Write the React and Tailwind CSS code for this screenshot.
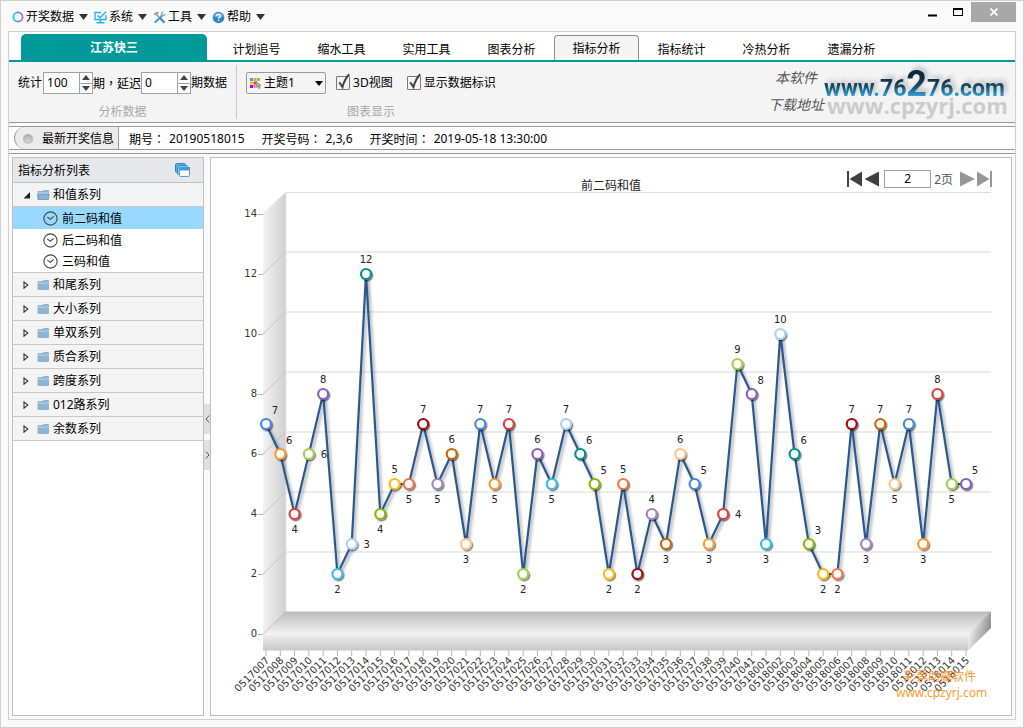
import React, { useState } from "react";

const COLORS = [
  "#4587dc", "#ff9830", "#d9403e", "#a3cf4b", "#8560b8", "#37bce3", "#a8d3f6", "#00918f",
  "#8ab700", "#ffba0e", "#fa7048", "#a30810", "#a184bf", "#cb6606", "#fdc384",
];

// Each entry is [value, label side]: a = above, b = below, r = right, u = upper right.
const SERIES = [
  [7, "u"], [6, "u"], [4, "b"], [6, "r"], [8, "a"], [2, "b"], [3, "r"], [12, "a"], [4, "b"], [5, "a"],
  [5, "b"], [7, "a"], [5, "b"], [6, "a"], [3, "b"], [7, "a"], [5, "b"], [7, "a"], [2, "b"], [6, "a"],
  [5, "b"], [7, "a"], [6, "u"], [5, "u"], [2, "b"], [5, "a"], [2, "b"], [4, "a"], [3, "b"], [6, "a"],
  [5, "u"], [3, "b"], [4, "r"], [9, "a"], [8, "u"], [3, "b"], [10, "a"], [6, "u"], [3, "u"], [2, "b"],
  [2, "b"], [7, "a"], [3, "b"], [7, "a"], [5, "b"], [7, "a"], [3, "b"], [8, "a"], [5, "b"], [5, "u"],
];

const LABEL_SHIFT = { a: [0, -11], b: [0, 19], r: [15, 4], u: [9, -10] };

const POINTS = SERIES.map(([value, side], i) => ({
  value,
  side,
  x: 55 + (i * 100) / 7,
  y: 442 - value * 30,
  color: COLORS[i % COLORS.length],
  issue: i < 35 ? "05170" + String(i + 7).padStart(2, "0") : "05180" + String(i - 34).padStart(2, "0"),
}));

const AXIS = [0, 2, 4, 6, 8, 10, 12, 14];

function Chart() {
  return (
    <svg viewBox="0 0 800 523" className="block w-full" role="img" aria-label="前二码和值">
      <defs>
        <linearGradient id="wall" x1="0" x2="1" y1="0" y2="0">
          <stop offset="0" stopColor="#f3f3f3" />
          <stop offset="1" stopColor="#cfcfcf" />
        </linearGradient>
        <linearGradient id="floor" x1="0" x2="0" y1="0" y2="1">
          <stop offset="0" stopColor="#bababa" />
          <stop offset="1" stopColor="#f2f2f2" />
        </linearGradient>
        <linearGradient id="front" x1="0" x2="0" y1="0" y2="1">
          <stop offset="0" stopColor="#f2f2f2" />
          <stop offset="1" stopColor="#c6c6c6" />
        </linearGradient>
        <linearGradient id="side" x1="0" x2="1" y1="0.3" y2="0.7">
          <stop offset="0.1" stopColor="#f0f0f0" />
          <stop offset="0.9" stopColor="#8c8c8c" />
        </linearGradient>
        <filter id="soft" x="-5%" y="-5%" width="110%" height="115%">
          <feDropShadow dx="2" dy="2" stdDeviation="1.6" floodColor="#000" floodOpacity="0.35" />
        </filter>
        <filter id="dot" x="-40%" y="-40%" width="200%" height="200%">
          <feDropShadow dx="1.2" dy="1.4" stdDeviation="0.5" floodColor="#000" floodOpacity="0.5" />
        </filter>
      </defs>

      <polygon points="52,21 75,0 75,419 52,442" fill="url(#wall)" />
      <path d="M75 0.5H780" stroke="#dcdcdc" />
      <path d="M75 0V419" stroke="#e4e4e4" />
      {AXIS.slice(1, 7).map((v) => (
        <g key={v}>
          <path d={`M52 ${442 - v * 30}L74.5 ${420 - v * 30}`} stroke="#c4c4c4" />
          <path d={`M75 ${420 - v * 30}H780`} stroke="#ececec" strokeWidth="2" />
        </g>
      ))}
      <polygon points="52,442 75,419 780,419 757,442" fill="url(#floor)" />
      <rect x="52" y="441.5" width="705" height="17" fill="url(#front)" />
      <polygon points="757,442 780,419 780,436 757,458.5" fill="url(#side)" />
      <path d="M52 442L75 419" stroke="#c4c4c4" />
      <path d="M75 419.5H780" stroke="#dcdcdc" />

      <g fontFamily="'DejaVu Sans', Verdana, sans-serif" fontSize="10" fill="#333">
        {AXIS.map((v) => (
          <g key={v}>
            <path d={`M47 ${442.5 - v * 30}H52`} stroke="#b4b4b4" />
            <text x="46" y={445 - v * 30} textAnchor="end">{v}</text>
          </g>
        ))}
        {POINTS.map((p, i) => (
          <g key={i}>
            <path d={`M${p.x} 458.5V464`} stroke="#b4b4b4" />
            <text transform={`translate(${p.x + 4} 469) rotate(-45)`} textAnchor="end">{p.issue}</text>
          </g>
        ))}
      </g>

      <polyline
        points={POINTS.map((p) => `${p.x},${p.y}`).join(" ")}
        fill="none" stroke="#2b598f" strokeWidth="2.2" strokeLinejoin="bevel" filter="url(#soft)"
      />
      {POINTS.map((p, i) => (
        <circle key={i} cx={p.x} cy={p.y} r="5" fill="#fff" stroke={p.color} strokeWidth="2.2" filter="url(#dot)" />
      ))}
      <g fontFamily="'DejaVu Sans', Verdana, sans-serif" fontSize="10" fill="#222" textAnchor="middle">
        {POINTS.map((p, i) => (
          <text key={i} x={p.x + LABEL_SHIFT[p.side][0]} y={p.y + LABEL_SHIFT[p.side][1]}>{p.value}</text>
        ))}
      </g>
      <g fontFamily="'Noto Sans', 'Noto Sans CJK SC', sans-serif" fontSize="12" fill="#ff9a33">
        <text x="693" y="489">彩票助赢软件</text>
        <text x="685" y="505">www.cpzyrj.com</text>
      </g>
    </svg>
  );
}

function Caret() {
  return (
    <svg width="9" height="6" viewBox="0 0 9 6" aria-hidden="true">
      <path d="M0 0H9L4.5 6Z" fill="#333" />
    </svg>
  );
}

function RingIcon() {
  return (
    <svg width="12" height="12" viewBox="0 0 12 12" aria-hidden="true">
      <defs>
        <linearGradient id="ring" x1="0" x2="1" y1="0" y2="0">
          <stop offset="0" stopColor="#12c4f5" />
          <stop offset="0.6" stopColor="#5a8cf0" />
          <stop offset="1" stopColor="#b65fdc" />
        </linearGradient>
      </defs>
      <circle cx="6" cy="6" r="4.6" fill="none" stroke="url(#ring)" strokeWidth="1.7" />
    </svg>
  );
}

function MonitorIcon() {
  return (
    <svg width="13" height="13" viewBox="0 0 13 13" fill="none" aria-hidden="true">
      <path d="M7 1.5H1V8.5H12V4" stroke="#2badf0" strokeWidth="1.3" />
      <path d="M3.5 4.5L6 6.8L12.2 0.8" stroke="#2badf0" strokeWidth="1.5" />
      <path d="M6.5 8.5V11.5M2.5 11.8H10.5" stroke="#2badf0" strokeWidth="1.4" />
    </svg>
  );
}

function ToolsIcon() {
  return (
    <svg width="13" height="13" viewBox="0 0 13 13" fill="none" aria-hidden="true">
      <path d="M1.8 11.8L9.3 4.2" stroke="#4c9bd6" strokeWidth="2" />
      <path d="M12.2 2.2L10.3 4L9 2.8L10.8 0.9C8.8 0.3 7.2 2 7.9 4L9 5.2C11.2 5.8 13 4 12.2 2.2Z" fill="#8aa6bd" />
      <path d="M3.5 3.5L7 7" stroke="#8d9aa6" strokeWidth="1.5" />
      <path d="M0.5 3.3L3.2 0.8L6.2 1.3L3.6 4.8L2.4 3.4L1.4 4.4Z" fill="#97a5b1" />
      <path d="M6.8 6.8L11.5 11.8" stroke="#3c8fd0" strokeWidth="2.3" />
    </svg>
  );
}

function HelpIcon() {
  return (
    <svg width="13" height="13" viewBox="0 0 13 13" aria-hidden="true">
      <circle cx="6.5" cy="6.5" r="5.8" fill="#2f86cf" />
      <path d="M1.5 5.5A5.2 5.2 0 0 1 11.5 5.5Q6.5 7.5 1.5 5.5Z" fill="#67acdf" />
      <path d="M4.6 5.1C4.6 2.6 8.5 2.7 8.4 5C8.3 6.3 6.6 6.3 6.5 7.7M6.5 8.8V10.1" fill="none" stroke="#fff" strokeWidth="1.4" />
    </svg>
  );
}

function PaletteIcon() {
  return (
    <svg width="12" height="12" viewBox="0 0 12 12" aria-hidden="true">
      <path d="M0 1H3V4H0Z" fill="#2fa4e7" />
      <path d="M3.5 1H6.5V4H3.5Z" fill="#f6a31c" />
      <path d="M7 1H10V4H7Z" fill="#8cc83c" />
      <path d="M0 4.5H3V7.5H0Z" fill="#f3c21a" />
      <path d="M3.5 4.5H6.5V7.5H3.5Z" fill="#ee3d3d" />
      <path d="M0 8H3V11H0Z" fill="#b200f0" />
      <path d="M3.5 8H5.5V11H3.5Z" fill="#f05ab0" />
      <path d="M6 4.5L11 8.5L9.2 8.8L10.2 11L8.9 11.6L7.9 9.4L6.5 10.5Z" fill="#aaa" stroke="#777" strokeWidth="0.6" />
    </svg>
  );
}

function FolderIcon({ open }) {
  return (
    <svg width="13" height="12" viewBox="0 0 13 12" aria-hidden="true">
      <path d="M0.5 3Q0.5 2 1.5 2H5.5L7 1H11Q12 1 12 2V10Q12 11 11 11H1.5Q0.5 11 0.5 10Z" fill="#8fb3d3" />
      <path d="M1 3.3H12V5H1Z" fill="#a9cbe1" />
      {open && <path d="M0.5 5.5H12.3L11.3 10.5H1.3Z" fill="#8eb0cf" stroke="#7497b8" strokeWidth="0.7" />}
    </svg>
  );
}

function ClockIcon() {
  return (
    <svg width="15" height="15" viewBox="0 0 15 15" fill="none" aria-hidden="true">
      <circle cx="7.5" cy="7.5" r="6.6" stroke="#444" strokeWidth="1.1" />
      <path d="M4.3 5.8L7.2 8.3L10.8 5.4" stroke="#444" strokeWidth="1.1" />
    </svg>
  );
}

function WindowsIcon() {
  return (
    <svg width="15" height="14" viewBox="0 0 15 14" aria-hidden="true">
      <rect x="0.5" y="0.5" width="10" height="9" rx="1" fill="#5fb2dc" stroke="#2789bf" />
      <rect x="2.5" y="2.5" width="10" height="9" rx="1" fill="#8cc8e8" stroke="#2789bf" />
      <rect x="4.5" y="4.5" width="10" height="9" rx="1" fill="#fff" stroke="#4aa3d2" />
      <path d="M4 4H15V7.5H4Z" fill="#3d9fd2" />
    </svg>
  );
}

const MENUS = [
  ["开奖数据", RingIcon],
  ["系统", MonitorIcon],
  ["工具", ToolsIcon],
  ["帮助", HelpIcon],
];

function TitleBar() {
  return (
    <header className="flex h-[30px] items-start justify-between pl-[11px] pr-[7px]">
      <nav className="flex gap-[6px]">
        {MENUS.map(([name, Icon]) => (
          <button key={name} type="button" className="flex h-[30px] items-center pt-[2px]">
            <Icon />
            <span className="pl-[2px] pr-[5px]">{name}</span>
            <Caret />
          </button>
        ))}
      </nav>
      <div className="flex items-start pt-px">
        <button type="button" aria-label="最小化" className="flex h-5 w-[26px] items-center justify-center">
          <svg width="9" height="9" viewBox="0 0 9 9"><path d="M0 6.5H9V8.5H0Z" fill="#000" /></svg>
        </button>
        <button type="button" aria-label="最大化" className="flex h-5 w-[26px] items-center justify-center">
          <svg width="10" height="8" viewBox="0 0 10 8"><path d="M0 0H10V8H0ZM1 2V7H9V2Z" fill="#000" fillRule="evenodd" /></svg>
        </button>
        <button type="button" aria-label="关闭" className="flex h-5 w-[45px] items-center justify-center bg-[#a8a8a8]">
          <svg width="8" height="8" viewBox="0 0 8 8"><path d="M0.5 0.5L7.5 7.5M7.5 0.5L0.5 7.5" stroke="#fff" strokeWidth="1.7" /></svg>
        </button>
      </div>
    </header>
  );
}

const TABS = ["计划追号", "缩水工具", "实用工具", "图表分析", "指标分析", "指标统计", "冷热分析", "遗漏分析"];

function TabBar() {
  return (
    <div role="tablist" className="flex h-[30px] items-end border-b-2 border-[#009999] bg-white pl-3">
      <button type="button" className="mr-[7px] h-[26px] w-[186px] rounded-t-[5px] bg-[#009999] pt-[2px] font-bold text-white">
        江苏快三
      </button>
      {TABS.map((t) =>
        t === "指标分析" ? (
          <button key={t} type="button" role="tab" aria-selected="true" className="h-[25px] w-[85px] rounded-t border border-b-0 border-[#8c8c8c] bg-[#f4f4f4] pt-[2px]">
            {t}
          </button>
        ) : (
          <button key={t} type="button" role="tab" aria-selected="false" className="h-[23px] w-[85px] pt-[2px]">
            {t}
          </button>
        )
      )}
    </div>
  );
}

function NumberBox({ label, initial }) {
  const [value, setValue] = useState(initial);
  return (
    <span className="flex h-[22px] border border-[#a0a0a8] bg-white">
      <input
        aria-label={label}
        value={value}
        onChange={(e) => setValue(Number(e.target.value) || 0)}
        className="w-[35px] pl-[3px] outline-none"
      />
      <span className="flex w-[13px] flex-col border-l border-[#a0a0a8]">
        <button type="button" aria-label={label + "增加"} onClick={() => setValue(value + 1)} className="flex flex-1 items-center justify-center border-b border-[#a0a0a8]">
          <svg width="8" height="5" viewBox="0 0 8 5"><path d="M4 0L8 5H0Z" fill="#444" /></svg>
        </button>
        <button type="button" aria-label={label + "减少"} onClick={() => setValue(Math.max(0, value - 1))} className="flex flex-1 items-center justify-center">
          <svg width="8" height="5" viewBox="0 0 8 5"><path d="M0 0H8L4 5Z" fill="#444" /></svg>
        </button>
      </span>
    </span>
  );
}

function Check({ children }) {
  return (
    <label className="flex items-center gap-px">
      <span className="grid h-5 w-4">
        <input type="checkbox" defaultChecked className="peer col-start-1 row-start-1 mt-[3px] h-[14px] w-[14px] appearance-none rounded-[1px] border border-[#777] bg-[#f4f4f4]" />
        <svg viewBox="0 0 16 20" className="pointer-events-none invisible col-start-1 row-start-1 h-5 w-4 peer-checked:visible" aria-hidden="true">
          <path d="M3.2 9.2L6.5 14Q8.5 6 13.2 1.2" fill="none" stroke="#444" strokeWidth="2" />
        </svg>
      </span>
      {children}
    </label>
  );
}

// Full-width punctuation is centred in its cell.
function Mark({ children }) {
  return <span lang="zh-TW" className="font-['Noto_Sans_CJK_TC',sans-serif]">{children}</span>;
}

function Brand() {
  return (
    <div className="flex">
      <div className="pt-[3px] text-center font-['Liberation_Serif','Noto_Sans_CJK_SC',serif] text-[14px] italic leading-[27px] text-[#555]">
        <div>本软件</div>
        <div>下载地址</div>
      </div>
      <svg width="186" height="60" viewBox="0 0 186 60" role="img" aria-label="www.76276.com www.cpzyrj.com">
        <defs>
          <linearGradient id="brand" gradientUnits="userSpaceOnUse" x1="0" x2="0" y1="8" y2="36">
            <stop offset="0.25" stopColor="#10293a" />
            <stop offset="0.6" stopColor="#174e6e" />
            <stop offset="1" stopColor="#3cb4ea" />
          </linearGradient>
          <filter id="brandShadow" x="-5%" y="-20%" width="112%" height="140%">
            <feDropShadow dx="3" dy="-3" stdDeviation="2" floodColor="#000" floodOpacity="0.22" />
          </filter>
        </defs>
        <text x="3" y="52" fontFamily="'Open Sans', sans-serif" fontWeight="700" fontSize="22" fill="#cbcbcb">www.cpzyrj.com</text>
        <text x="0" y="34" fontFamily="Roboto, sans-serif" fontWeight="700" fontSize="23" fill="url(#brand)" filter="url(#brandShadow)">
          www.76<tspan fontSize="36">2</tspan>76.com
        </text>
      </svg>
    </div>
  );
}

function Ribbon() {
  return (
    <div className="flex h-[61px] justify-between border-b border-[#999] bg-[#f4f4f4] pl-[9px] pr-[5px]">
      <div className="flex">
        <section className="flex flex-col items-center pt-[10px]">
          <div className="flex items-center">
            <span className="pr-px">统计</span>
            <NumberBox label="统计期数" initial={100} />
            <span>期<Mark>，</Mark>延迟</span>
            <NumberBox label="延迟期数" initial={0} />
            <span>期数据</span>
          </div>
          <h2 className="pt-[9px] text-[#a8a8a8]">分析数据</h2>
        </section>
        <div className="ml-[9px] mr-[9px] mt-[3px] h-[54px] w-px bg-[#c8c8c8]" />
        <section className="flex flex-col items-center pt-[10px]">
          <div className="flex items-center">
            <label className="mr-[10px] flex h-[22px] items-center rounded-[2px] border border-[#999] pl-[3px] pr-[2px]">
              <PaletteIcon />
              <select aria-label="主题" className="w-[53px] appearance-none pl-[2px] outline-none">
                <option>主题1</option>
                <option>主题2</option>
              </select>
              <svg width="8" height="5" viewBox="0 0 8 5" aria-hidden="true"><path d="M0 0H8L4 5Z" fill="#000" /></svg>
            </label>
            <Check>3D视图</Check>
            <span className="w-[14px]" />
            <Check>显示数据标识</Check>
          </div>
          <h2 className="pt-[9px] text-[#a8a8a8]">图表显示</h2>
        </section>
      </div>
      <Brand />
    </div>
  );
}

const DRAW = [
  ["期号", "20190518015"],
  ["开奖号码", "2,3,6"],
  ["开奖时间", "2019-05-18 13:30:00"],
];

function InfoBar() {
  return (
    <div className="mt-[3px] flex h-[24px] border-y border-[#999] bg-white pl-[5px]">
      <div className="flex w-[105px] items-center gap-[9px] rounded-l-[11px] border-x border-[#999] bg-[#ebebeb] pl-[8px] pt-[2px]">
        <svg width="10" height="10" viewBox="0 0 10 10" aria-hidden="true">
          <defs>
            <radialGradient id="led" cx="0.5" cy="0.7" r="0.7">
              <stop offset="0" stopColor="#d4d4d4" />
              <stop offset="1" stopColor="#a9a9a9" />
            </radialGradient>
          </defs>
          <circle cx="5" cy="5" r="5" fill="url(#led)" />
        </svg>
        最新开奖信息
      </div>
      <dl className="flex items-center gap-[17px] pl-[10px] pt-[2px]">
        {DRAW.map(([name, value]) => (
          <div key={name} className="flex gap-1">
            <dt>{name}<Mark>：</Mark></dt>
            <dd>{value}</dd>
          </div>
        ))}
      </dl>
    </div>
  );
}

const ITEMS = ["前二码和值", "后二码和值", "三码和值"];
const GROUPS = ["和尾系列", "大小系列", "单双系列", "质合系列", "跨度系列", "012路系列", "余数系列"];

function GroupRow({ name, open }) {
  return (
    <button type="button" aria-expanded={!!open} className="flex h-6 w-full items-center border-b border-[#c8c8c8] bg-[#f4f4f4] pl-[10px]">
      <svg width="7" height="8" viewBox="0 0 7 8" aria-hidden="true">
        {open ? <path d="M7 1V7.5H0.5Z" fill="#222" /> : <path d="M1 0.8L4.8 4L1 7.2Z" fill="#fff" stroke="#333" strokeWidth="1.1" />}
      </svg>
      <span className="pl-[7px]"><FolderIcon open={open} /></span>
      <span className="pl-[3px]">{name}</span>
    </button>
  );
}

function Sidebar() {
  return (
    <aside className="w-[192px] shrink-0 border border-[#bfbfbf] bg-white">
      <div className="flex h-[25px] items-center justify-between border-b border-[#bfbfbf] bg-[#e6e7eb] pl-[5px] pr-[13px]">
        <h1 className="pt-[2px]">指标分析列表</h1>
        <button type="button" aria-label="窗口"><WindowsIcon /></button>
      </div>
      <GroupRow name="和值系列" open />
      <ul className="h-[66px] border-b border-[#c8c8c8]">
        {ITEMS.map((name, i) => (
          <li key={name}>
            <button type="button" className={"flex w-full items-center gap-1 pl-[30px] " + (i === 0 ? "h-[22px] bg-[#99d9ff]" : i === 1 ? "h-[22px]" : "h-[21px]")}>
              <ClockIcon />
              <span className="pt-px">{name}</span>
            </button>
          </li>
        ))}
      </ul>
      {GROUPS.map((name) => <GroupRow key={name} name={name} />)}
    </aside>
  );
}

function Splitter() {
  return (
    <div className="flex w-[6px] shrink-0 flex-col items-center gap-[6px] pt-[247px]">
      <button type="button" aria-label="收起" className="flex h-[30px] w-full items-center justify-center bg-[#e0e0e0]">
        <svg width="5" height="8" viewBox="0 0 5 8"><path d="M4.2 0.5L1 4L4.2 7.5" fill="none" stroke="#555" /></svg>
      </button>
      <button type="button" aria-label="展开" className="flex h-[30px] w-full items-center justify-center bg-[#e0e0e0]">
        <svg width="5" height="8" viewBox="0 0 5 8"><path d="M0.8 0.5L4 4L0.8 7.5" fill="none" stroke="#555" /></svg>
      </button>
    </div>
  );
}

function Pager() {
  return (
    <div className="flex items-center justify-self-end pr-[19px] pt-2">
      <button type="button" aria-label="首页">
        <svg width="15" height="16" viewBox="0 0 15 16"><path d="M0 0H2V16H0ZM15 0.5V15.5L2.5 8Z" fill="#404040" /></svg>
      </button>
      <button type="button" aria-label="上一页" className="ml-[2px]">
        <svg width="15" height="16" viewBox="0 0 15 16"><path d="M15 0.5V15.5L0.5 8Z" fill="#404040" /></svg>
      </button>
      <input aria-label="页码" defaultValue="2" className="ml-[5px] h-[18px] w-[47px] border border-[#a0a0a8] bg-white text-center outline-none" />
      <span className="ml-[3px] pt-px text-[#555]">2页</span>
      <button type="button" aria-label="下一页" className="ml-[7px]">
        <svg width="15" height="16" viewBox="0 0 15 16"><path d="M0 0.5V15.5L15 8Z" fill="#979797" /></svg>
      </button>
      <button type="button" aria-label="末页" className="ml-[2px]">
        <svg width="15" height="16" viewBox="0 0 15 16"><path d="M13 0H15V16H13ZM0 0.5V15.5L12.5 8Z" fill="#979797" /></svg>
      </button>
    </div>
  );
}

export default function App() {
  return (
    <div className="flex min-h-screen flex-col border border-[#d0d0d0] bg-[#fafafa] font-['Noto_Sans','Noto_Sans_CJK_SC',sans-serif] text-xs leading-[18px] text-black">
      <TitleBar />
      <div className="mx-[7px] mb-[7px] flex flex-1 flex-col border border-[#d0d0d0]">
        <TabBar />
        <Ribbon />
        <InfoBar />
        <div className="mt-[3px] flex flex-1 border-t border-[#999] pb-[3px] pl-[3px] pr-[3px] pt-[3px]">
          <Sidebar />
          <Splitter />
          <main className="min-w-0 flex-1 border border-[#bfbfbf] bg-white">
            <div className="grid h-[34px] grid-cols-[1fr_auto_1fr] items-center">
              <span />
              <h2 className="self-end leading-3 text-[#222]">前二码和值</h2>
              <Pager />
            </div>
            <Chart />
          </main>
        </div>
      </div>
    </div>
  );
}
